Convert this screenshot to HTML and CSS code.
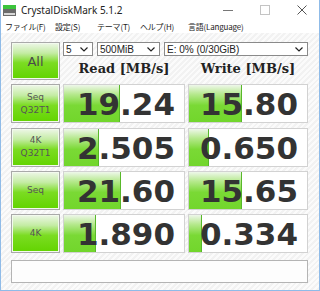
FILE: index.html
```html
<!DOCTYPE html>
<html lang="ja">
<head>
    <meta charset="UTF-8">
    <title>CrystalDiskMark 5.1.2</title>
    <link rel="stylesheet" href="styles.css">
</head>
<body>
    <div class="window">
        <div class="titlebar">
            <svg class="app-icon" width="13" height="11" viewBox="0 0 13 11">
                <rect x="0" y="0" width="13" height="4" fill="#3cc43c"/>
                <rect x="0" y="4" width="13" height="7" fill="#6b6b6b"/>
                <rect x="1" y="8" width="11" height="2" fill="#d8d8d8"/>
            </svg>
            <span class="title">CrystalDiskMark 5.1.2</span>
            <div class="controls">
                <svg width="10" height="10" viewBox="0 0 10 10"><path d="M0 5.5H10" stroke="#777" stroke-width="1"/></svg>
                <svg width="10" height="10" viewBox="0 0 10 10"><rect x="0.5" y="0.5" width="9" height="9" fill="none" stroke="#c4c4c4"/></svg>
                <svg width="10" height="10" viewBox="0 0 10 10"><path d="M0.5 0.5L9.5 9.5M9.5 0.5L0.5 9.5" stroke="#555" stroke-width="1"/></svg>
            </div>
        </div>

        <div class="menubar">
            <span class="menu-item">ファイル(F)</span>
            <span class="menu-item">設定(S)</span>
            <span class="menu-item">テーマ(T)</span>
            <span class="menu-item">ヘルプ(H)</span>
            <span class="menu-item">言語(Language)</span>
        </div>

        <div class="main">
            <div class="grid">
                <div class="btn btn-all">All</div>
                <div class="head">
                    <div class="selects">
                        <div class="select sel-count">5<svg class="chev" viewBox="0 0 8 5"><path d="M0.5 0.5L4 4L7.5 0.5" fill="none" stroke="#222" stroke-width="1.2"/></svg></div>
                        <div class="select sel-size">500MiB<svg class="chev" viewBox="0 0 8 5"><path d="M0.5 0.5L4 4L7.5 0.5" fill="none" stroke="#222" stroke-width="1.2"/></svg></div>
                        <div class="select sel-drive">E: 0% (0/30GiB)<svg class="chev" viewBox="0 0 8 5"><path d="M0.5 0.5L4 4L7.5 0.5" fill="none" stroke="#222" stroke-width="1.2"/></svg></div>
                    </div>
                    <div class="labels">
                        <span class="label-read">Read [MB/s]</span>
                        <span class="label-write">Write [MB/s]</span>
                    </div>
                </div>

                <div class="btn">Seq<br>Q32T1</div>
                <div class="cell"><span class="bar" style="width:55px"></span><span class="num">19.24</span></div>
                <div class="cell"><span class="bar" style="width:52px"></span><span class="num">15.80</span></div>

                <div class="btn">4K<br>Q32T1</div>
                <div class="cell"><span class="bar" style="width:34px"></span><span class="num">2.505</span></div>
                <div class="cell"><span class="bar" style="width:19px"></span><span class="num">0.650</span></div>

                <div class="btn">Seq</div>
                <div class="cell"><span class="bar" style="width:56px"></span><span class="num">21.60</span></div>
                <div class="cell"><span class="bar" style="width:52px"></span><span class="num">15.65</span></div>

                <div class="btn">4K</div>
                <div class="cell"><span class="bar" style="width:31px"></span><span class="num">1.890</span></div>
                <div class="cell"><span class="bar" style="width:12px"></span><span class="num">0.334</span></div>
            </div>

            <div class="message"></div>
        </div>
    </div>
</body>
</html>
```

FILE: styles.css
```css
body {
    margin: 0;
    background-color: #ffffff;
    font-family: "DejaVu Sans", sans-serif;
}
.window {
    width: 318px;
    height: 290px;
    border: 1px solid #8fbbe8;
    border-top: none;
    background-color: #ffffff;
    display: flex;
    flex-direction: column;
}
.titlebar {
    height: 20px;
    display: flex;
    align-items: center;
    padding-left: 2px;
}
.app-icon {
    margin-right: 5px;
}
.title {
    font-family: "Noto Sans", sans-serif;
    font-size: 10px;
    color: #222;
}
.controls {
    margin-left: auto;
    display: flex;
    gap: 27px;
    padding-right: 12px;
}
.menubar {
    height: 13px;
    display: grid;
    grid-template-columns: 50px 42px 43px 48px auto;
    align-items: center;
    padding-left: 4px;
}
.menu-item {
    font-family: "Noto Sans CJK JP", "Noto Sans", sans-serif;
    font-size: 8px;
    letter-spacing: -0.2px;
    color: #222;
    white-space: nowrap;
}
.main {
    flex: 1;
    background: repeating-linear-gradient(135deg, #f2f2f2 0 2px, #fbfbfb 2px 4px);
    padding: 9px 0 0 10px;
}
.grid {
    display: grid;
    grid-template-columns: 49px 122px 120px;
    grid-template-rows: 38px repeat(4, 39px);
    column-gap: 3px;
    row-gap: 4.33px;
}
.btn {
    box-sizing: border-box;
    border: 1px solid #a9a9a9;
    box-shadow: inset 0 0 0 1px #f3faee;
    background: linear-gradient(to bottom, #eef7e8 0%, #c4eca4 28%, #7bdc22 55%, #62d400 100%);
    color: #555;
    font-size: 9px;
    line-height: 13px;
    text-align: center;
    display: flex;
    align-items: center;
    justify-content: center;
}
.btn-all {
    font-size: 13px;
    color: #4a4a4a;
}
.head {
    grid-column: 2 / 4;
    display: flex;
    flex-direction: column;
}
.selects {
    display: flex;
    gap: 4px;
    height: 14px;
}
.select {
    box-sizing: border-box;
    border: 1px solid #8a8a8a;
    background-color: #ffffff;
    font-family: "Liberation Sans", sans-serif;
    font-size: 10px;
    color: #222;
    display: flex;
    align-items: center;
    padding-left: 2px;
}
.sel-count {
    width: 30px;
}
.sel-size {
    width: 63px;
}
.sel-drive {
    width: 144px;
}
.chev {
    width: 8px;
    height: 5px;
    margin-left: auto;
    margin-right: 4px;
}
.labels {
    flex: 1;
    display: flex;
    gap: 3px;
    align-items: center;
}
.labels span {
    font-family: "DejaVu Serif", serif;
    font-weight: bold;
    font-size: 13px;
    color: #222;
    text-align: center;
}
.label-read {
    width: 122px;
}
.label-write {
    width: 120px;
}
.cell {
    position: relative;
    box-sizing: border-box;
    border: 1px solid #d2d2d2;
    background-color: #ffffff;
    text-align: right;
    padding-right: 9px;
}
.bar {
    position: absolute;
    left: 0;
    top: 0;
    bottom: 0;
    background: linear-gradient(to bottom, #eef7ea 0%, #b6e98e 25%, #7ad935 55%, #72d62c 100%);
    border-right: 1px solid #58b82a;
}
.num {
    position: relative;
    font-family: "DejaVu Sans", sans-serif;
    font-weight: bold;
    font-size: 31px;
    line-height: 39px;
    color: #333333;
}
.message {
    margin-top: 7px;
    width: 297px;
    height: 23px;
    box-sizing: border-box;
    border: 1px solid #b4b4b4;
    background-color: #fdfdfd;
}
```
